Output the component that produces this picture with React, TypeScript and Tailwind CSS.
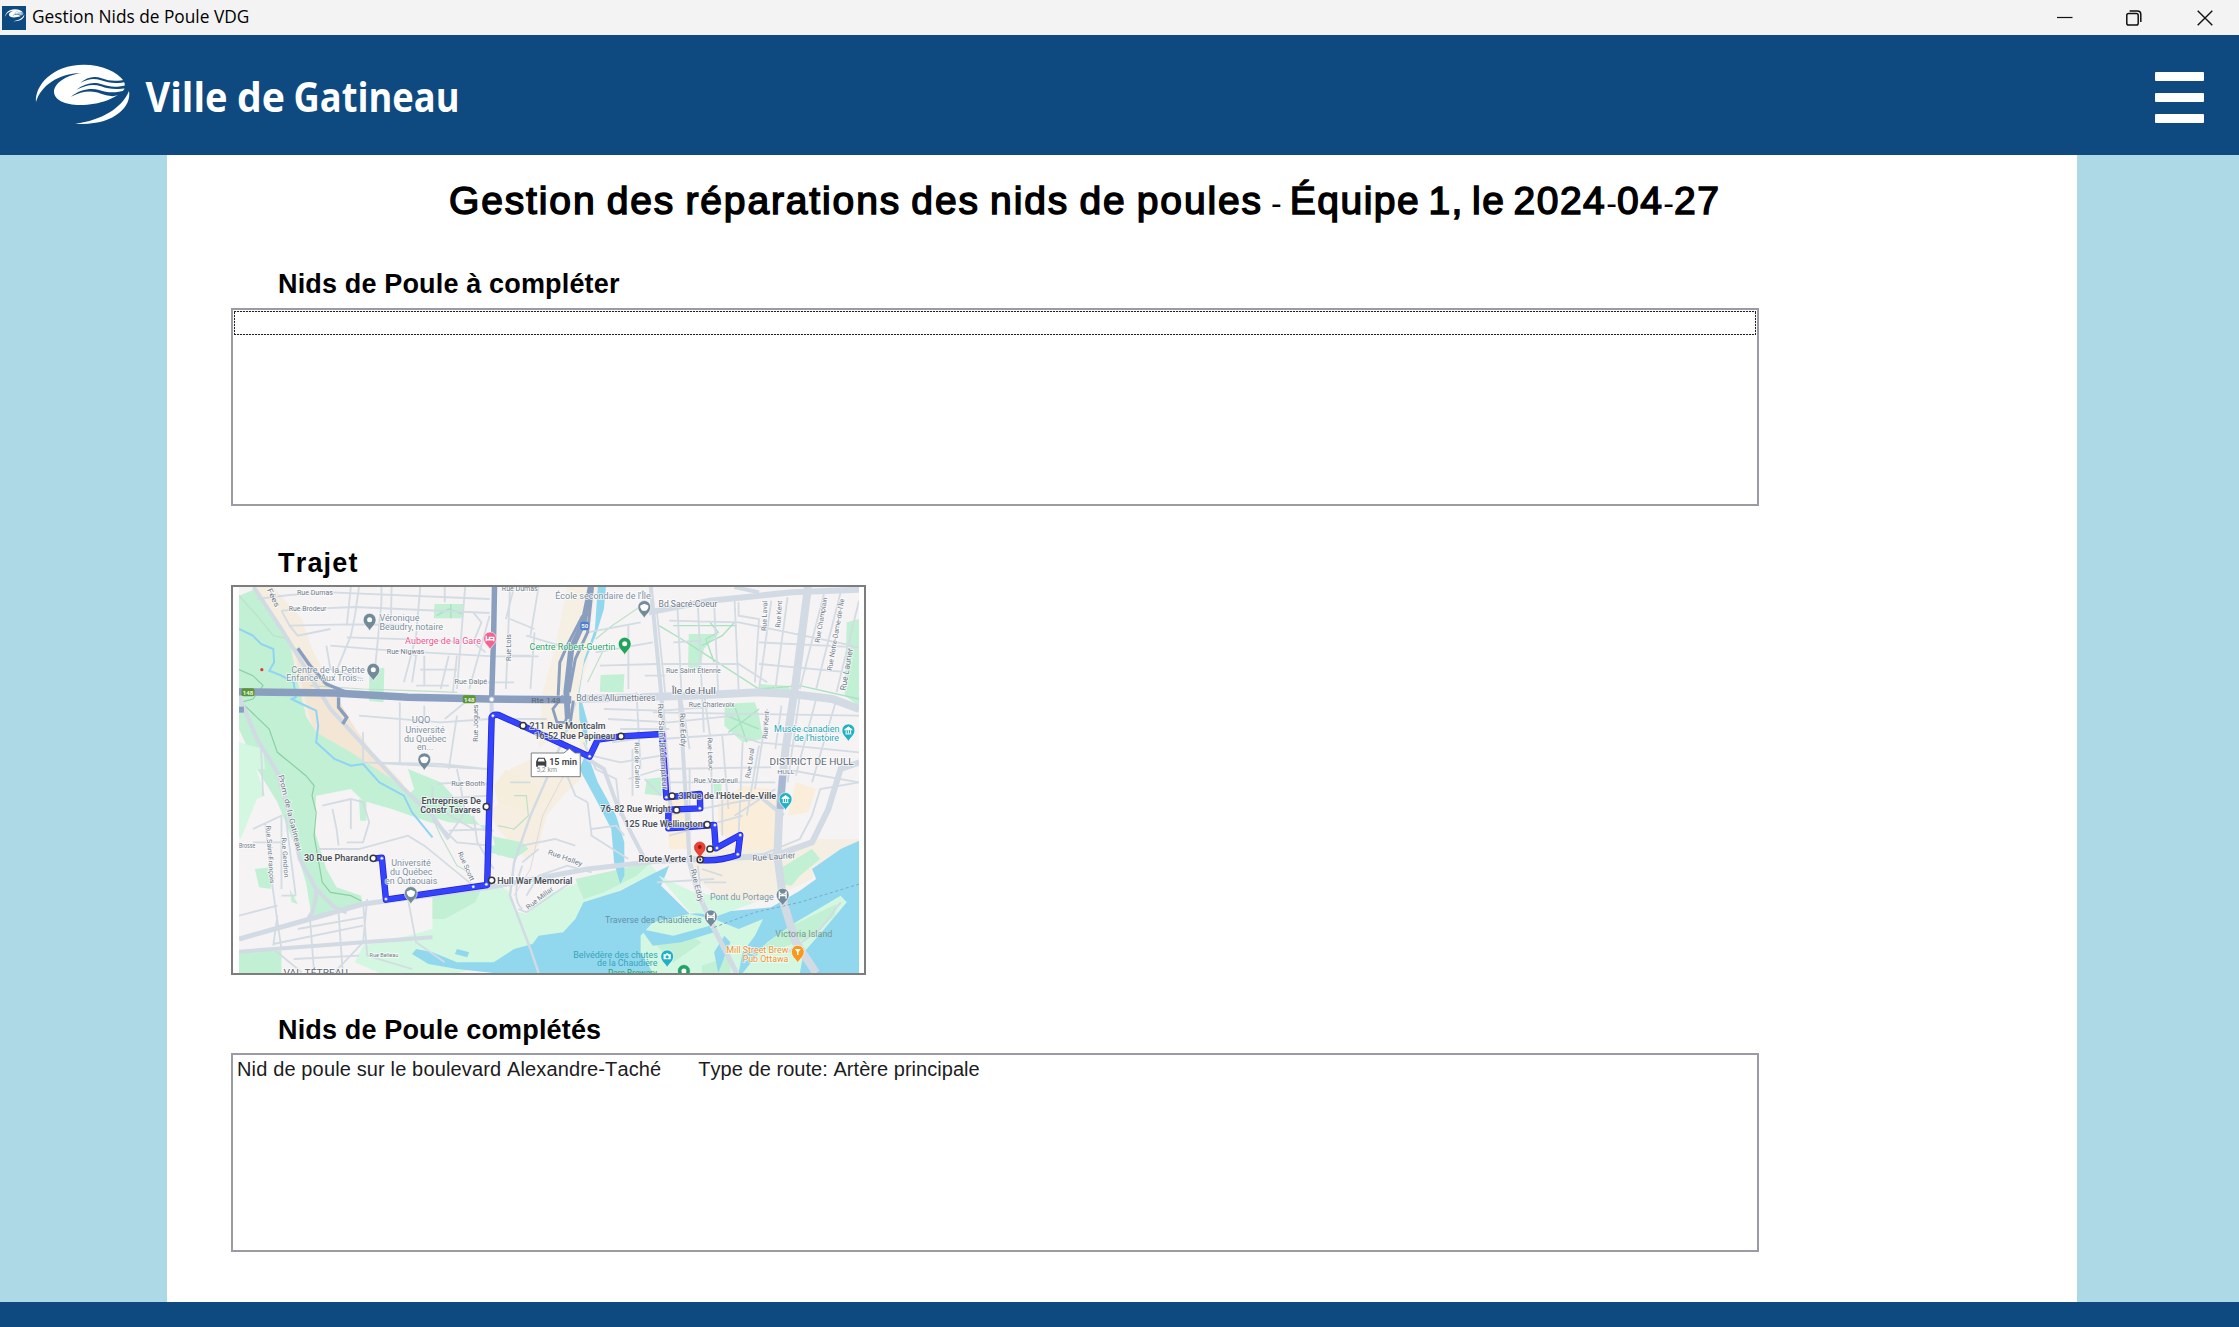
import React from "react";

const SANS = "font-['Liberation_Sans',Arial,sans-serif]";

function EyeMark() {
  return (
    <>
      <path
        fill="#fff"
        d="M33 141C29 92 82 29 176 29C232 29 276 50 296 77C301 86 300 98 297 104C276 128 226 150 164 150C121 150 87 134 87 110C87 86 122 61 168 54C98 56 48 92 33 141Z"
      />
      <path fill="#fff" d="M312 108C321 156 264 214 151 206C230 196 290 160 312 108Z" />
      <g fill="#0e4a80">
        <path d="M166 84C185 66 208 61 230 70C253 79 275 80 306 73L306 80C276 87 250 84 228 76C207 69 190 71 166 84Z" />
        <path d="M154 104C180 84 208 79 230 88C255 97 277 98 306 90L306 98C276 106 250 102 228 94C204 86 184 90 154 104Z" />
        <path d="M138 125C166 102 200 98 222 105C250 114 270 115 306 104L296 118L262 124C238 121 232 117 214 112C190 106 166 111 138 125Z" />
      </g>
    </>
  );
}

const INK = "#4b5058";
const kx = 1 / 2.45;
const ky = 1 / 3;
const px = (x: number) => (x - 26) * kx;
const py = (y: number) => (y - 14) * ky;

type LabelProps = {
  x: number;
  y: number;
  w: number;
  t: string;
  size?: number;
  color?: string;
  bold?: boolean;
  halo?: boolean;
  rot?: number;
};

/* w is in map units for horizontal labels and in screen pixels for rotated ones */
function Label({ x, y, w, t, size = 8.6, color = "#6f7a88", bold, halo = true, rot }: LabelProps) {
  const X = px(x);
  const Y = py(y);
  return (
    <text
      x={X}
      y={Y}
      fontSize={size}
      fill={color}
      fontWeight={bold ? 600 : 400}
      textLength={rot === undefined ? w * kx : w}
      lengthAdjust="spacingAndGlyphs"
      stroke={halo ? "#ffffff" : "none"}
      strokeWidth={halo ? 1.6 : 0}
      strokeOpacity={0.75}
      paintOrder="stroke"
      transform={rot === undefined ? undefined : `rotate(${rot} ${X} ${Y})`}
    >
      {t}
    </text>
  );
}

function Pin({ x, y, color, inner = "dot" }: { x: number; y: number; color: string; inner?: string }) {
  return (
    <g transform={`translate(${px(x)} ${py(y)})`}>
      <path
        d="M0 9.5C-1.2 5.5-6.4 3.6-6.4-2A6.4 6.4 0 0 1 6.4-2C6.4 3.6 1.2 5.5 0 9.5Z"
        fill={color}
        stroke="#fff"
        strokeWidth="0.6"
      />
      {inner === "dot" && <circle cy="-2" r="2.5" fill="#fff" />}
      {inner === "cap" && <path d="M-4-3.5L0-5.2L4-3.5V-1.5L2.6 1.2Q0 2.6-2.6 1.2L-4-1.5Z" fill="#fff" />}
      {inner === "bed" && <path d="M-3.8-4.6V1M-3.8-.6H3.8M3.8 1V-3H-.4V-.8M-2.2-2.4h.6" stroke="#fff" strokeWidth="1.3" fill="none" />}
      {inner === "bridge" && <path d="M-3.4-5.5V2M3.4-5.5V2M-3.4-1H3.4M-3.4-4Q0-.5 3.4-4" stroke="#fff" strokeWidth="1.3" fill="none" />}
      {inner === "museum" && <path d="M-3.8-2.6L0-5.4L3.8-2.6ZM-3 1.6H3M-2.2-2V1M0-2V1M2.2-2V1" stroke="#fff" strokeWidth="1" fill="#fff" />}
      {inner === "camera" && <path d="M-3.6-4H-1.4L-.7-5H.7L1.4-4H3.6V1H-3.6ZM0-3A1.6 1.6 0 1 0 .01-3Z" fill="#fff" fillRule="evenodd" />}
      {inner === "cup" && <path d="M-3-4.6H3L.7-1.6V1.4H-.7V-1.6Z" fill="#fff" />}
    </g>
  );
}

const minorRoads = [
  "M70 50L150 38L250 30L640 50M130 85L230 78L310 74L640 92M150 130L290 126L440 128M290 165L470 172L560 178M250 190L400 205L650 222L760 222",
  "M320 14L310 100L300 160L260 280M300 14L290 130M375 14V60L360 250L350 300M400 14L398 120M470 14L460 160L430 300M530 14V60M580 14L560 320M640 100L590 320M600 90L620 120L600 180L630 210",
  "M130 85L150 130L170 160L250 140M240 190L250 260L330 290M440 210L460 220L450 300M480 220V310M540 220L520 320M560 220L550 330M470 262H560M460 310H540M690 14L680 320M750 150L740 320M690 110L750 140M690 220H740M600 300H700",
  "M320 400L520 420L640 410M330 450V540L640 560M420 360V540M480 420V370M560 400L540 560M330 540L520 545L630 560M530 410L600 340M510 605L560 600L640 605M500 610V650L640 640M560 560L570 620L580 690L540 760",
  "M730 160L840 200M690 410H780M700 14L680 110M760 14L740 160M900 210L1040 180M880 150L1010 120M910 250L1050 245M980 130V320M1020 280L1070 280M1000 330L1010 560M1040 390L1545 400",
  "M1050 90L1070 330M1100 70L1110 330M1150 60L1165 450M1190 60L1200 330M1240 50L1250 320M1080 115L1250 120M1090 180L1160 175M1060 245L1250 245L1320 300M1250 60V100L1300 110L1290 300M1330 55L1300 320M1370 45L1340 320M1250 120L1530 190M1300 180L1545 195M1460 30L1400 320M1500 30L1440 320M1545 55L1490 330M1300 245L1520 270",
  "M920 380L1060 385L1230 370M930 410L1080 420L1240 400M960 440H1080M1060 470L1240 455L1300 480L1545 510M1110 350L1130 500M1165 330L1180 460L1190 800M1210 460L1225 680M1060 560L1330 555M1070 600L1340 600M980 590L1060 560M1260 480L1250 760M1300 490L1270 700M1320 380L1290 620M1355 370L1340 500M1400 340L1370 600M1440 350L1390 580M1490 350L1430 600M1340 440L1500 450M1360 560L1545 600",
  "M870 480L900 560L950 590L960 700M890 520L960 540L1060 520M800 560L830 580L850 640L880 660M890 740L950 730L970 760M880 660L890 760L980 830M940 480L1060 460M990 500V640M1020 590L1060 640M1090 640L1240 650M1070 700L1330 640M1080 760L1260 700M1130 560V850M1210 640V760M1150 850L1160 960M1050 900L1190 890",
  "M220 800H320L440 760L480 790L600 910M230 670L300 650L330 660L345 720L330 780H290M255 680L265 740L270 790M300 650V740M80 500L85 640M60 740L130 700V920M90 720L110 930L130 1100M130 940H165M60 780L130 780M140 700L165 940M26 1000L120 970M120 1000L110 1090M200 1010L210 1170M270 990L280 1170M330 960L340 1120L450 1160M170 1040L330 1005M110 1085L330 1030M110 1100L180 1170M160 1130L320 1120M340 950L330 1080L260 1170",
  "M720 790L800 770L850 790M730 940L760 880L830 850L890 870M710 980L730 990L840 900M720 850Q690 950 720 980M720 840L760 800M640 740L540 745M530 690L600 740L650 745M640 790L560 780L500 710M600 700L610 780L650 860M690 600H740",
  "M440 950L460 1080L530 1140M1160 860L1210 880M1165 900H1220M1280 830L1400 770L1430 700L1450 620L1545 600M1240 700L1340 620M1270 830L1350 800M1370 1110L1450 1040L1500 960",
];

const poiGreen = "#1fa463";
const grey = "#738a98";

function TrajetMap() {
  const n = { vectorEffect: "non-scaling-stroke" as const };
  return (
    <svg width="620" height="386" viewBox="0 0 620 386" className="block font-[Roboto,'Noto_Sans',sans-serif]">
      <g transform="scale(0.408163 0.333333) translate(-26 -14)" fill="none">
        <rect x="26" y="14" width="1520" height="1158" fill="#f5f3f4" />
        {/* sand */}
        <path fill="#f4ede0" d="M60 14H110L180 110L205 200L260 330L330 480L420 590L480 690L420 640L300 520L210 440L160 330L150 190Z" />
        <path fill="#f3e6d4" d="M160 190L190 220L265 340L300 420L400 590L320 550L260 500L210 450L190 360Z" />
        <path fill="#f5f0e3" d="M830 14H905L890 100L880 240L860 330L880 480L870 560L860 470L800 450L760 500L770 330L800 200Z" />
        <path fill="#f5eee1" d="M690 560L760 520L870 580L820 640L780 700L760 790L730 830L660 740L640 690L680 640Z" />
        <path fill="#f6eedc" d="M790 640L740 690L660 660L650 610L680 560Z" />
        <path fill="#faeeda" d="M1070 650L1130 640V800H1080ZM1200 660L1260 610L1330 620L1360 700L1350 800L1240 800L1200 740ZM1390 600L1440 620L1420 690L1370 700Z" />
        <path fill="#f5efe3" d="M1130 800H1340L1450 770L1545 770V800L1440 850L1430 890L1380 920L1290 960H1210L1180 920L1130 880Z" />
        <path fill="#f4ece1" d="M1390 1172L1440 1090L1500 1010L1546 990V1172Z" />
        {/* parks */}
        <path fill="#c1f0d4" d="M26 40L62 22L90 70L130 130L150 180L170 300L190 400L215 450L300 510L400 590L450 650L520 730L470 710L400 680L330 655L300 620L215 640L210 740L240 860L265 915L325 940L330 965L260 980L205 1010L190 900L160 780L120 660L70 560L26 440Z" />
        <path fill="#d3f7e1" d="M26 480L60 530L90 640L70 650L30 770L26 760ZM26 480L85 500L90 560L50 560Z" />
        <path fill="#c1f0d4" d="M330 620L440 640L455 620L440 560L520 600L640 760L720 780L730 800L660 820L640 730L540 720L440 680Z" />
        <path fill="#c1f0d4" d="M320 650L338 655V715H323Z" />
        <path fill="#c1f0d4" d="M505 65H575L573 108H503ZM345 262L382 256L380 360L345 356ZM65 860L105 855V920L75 915ZM912 278L970 276L968 330L910 328ZM1128 155L1200 155L1180 180L1165 200L1155 260L1126 258ZM1216 365L1290 360L1300 400L1310 470L1260 480L1215 430ZM1300 305L1370 310L1380 325L1300 322ZM1515 120L1546 110V370L1510 340ZM1025 590L1060 585L1062 640L1020 635ZM1188 605H1208V635H1190ZM150 920L170 965L155 960Z" />
        <path fill="#c1f0d4" d="M26 1105H130V1172H26Z" />
        <path fill="#d3f7e1" d="M330 1090L440 1060L500 1040L500 940L610 910L720 880L800 930L860 900L1030 840L1050 870L930 940L850 1010L820 1050L750 1110L640 1150L560 1172H370L310 1140Z" />
        <path fill="#f5f3f4" d="M650 900L720 850L760 800L850 790L860 860L780 940L730 995L700 985L690 930Z" />
        <path fill="#c1f0d4" d="M500 945L625 905L605 960L530 1010H500ZM850 890L1035 840L1000 880L920 930L870 950ZM640 790L720 780L735 800L700 830L640 810Z" />
        {/* water */}
        <path
          fill="#91d8ef"
          d="M1546 775L1500 800L1430 860L1440 890L1400 925L1330 975L1240 985L1130 994L1060 910L1080 850L1030 880L960 925L870 960L850 1010L820 1050L760 1060L745 1085L700 1100L650 1140L560 1140L500 1110L460 1100L450 1115L490 1145L560 1160L650 1172H1546Z"
        />
        <path fill="#91d8ef" d="M905 14H925L920 80L900 160L870 250L860 330L880 420L878 510L905 600L950 700L970 780V880L960 905L945 840L938 740L900 650L860 560L880 500L860 410L858 330L872 230L898 140Z" />
        <path fill="#91d8ef" d="M560 1100L590 1110L585 1125L555 1115Z" />
        {/* islands */}
        <path fill="#d3f7e1" d="M1010 1060L1040 1020L1130 995L1190 1010L1250 1040L1310 1010L1290 1060L1260 1110L1250 1172H1040L1010 1110Z" />
        <path fill="#d3f7e1" d="M1260 1172L1320 1080L1390 1020L1500 940L1515 960L1460 1040L1410 1110L1400 1172Z" />
        <path fill="#c1f0d4" d="M1310 1090L1380 1030L1490 965L1485 1000L1430 1060L1330 1110Z" />
        <path fill="#c1f0d4" d="M1050 1090L1130 1060L1160 1080L1090 1140ZM1160 1150L1230 1120V1172H1160ZM1350 860L1430 800L1450 830L1400 880L1380 910L1350 905Z" />
        <path fill="#d3f7e1" d="M1054 880L1140 930L1290 960L1200 1000L1130 990Z" />
        <path fill="#91d8ef" d="M1010 1040L1090 1060L1180 1030L1190 1050L1110 1080L1040 1090ZM1200 1172L1230 1080L1215 1060L1190 1110ZM1410 1150L1500 1030L1546 1000V1010L1440 1120Z" />
        {/* creeks and paths */}
        <path {...n} stroke="#8fd3f5" strokeWidth="2" d="M26 140L60 160L80 185L110 200L112 240L100 265L130 280L160 300L165 345L155 350L180 365L215 385L220 430L215 480L260 530L300 550L330 545L370 600L430 640L450 690L500 765" />
        <path {...n} stroke="#8ccfa2" strokeWidth="1.2" d="M26 262L60 280L85 310L60 350L30 360M40 370L100 440L120 510L190 580L210 610L205 640L215 690L210 760L230 900L250 930L300 940L325 955" />
        <path {...n} stroke="#bfe0c8" strokeWidth="1.2" d="M26 40L70 100L110 160L150 170M200 310L330 320L450 325L560 330M480 650L520 760L560 850L590 870M900 170L940 130L1000 80L1030 60M880 300L920 200M700 640L730 640L735 700L700 740L660 730" />
        <path {...n} stroke="#a9e2c0" strokeWidth="1.4" d="M1055 130L1110 170L1180 225L1300 320L1400 310L1546 350M1090 130H1245M1160 190L1210 160L1240 120M1180 120L1200 150L1170 170L1190 240M1220 400L1300 440M1240 370L1270 480M1225 450L1300 380M510 100L540 80L575 95M545 65V108" />
        {/* minor streets */}
        <g stroke="#d3dbe3">
          {minorRoads.map((d) => (
            <path key={d} {...n} strokeWidth="1.8" d={d} />
          ))}
        </g>
        {/* arterial streets */}
        <g stroke="#d2dae4">
          <path {...n} strokeWidth="4" d="M62 14L130 140L190 260L250 380L370 540L430 620L500 700L540 770" />
          <path {...n} strokeWidth="4" d="M26 340L70 470L120 570L150 700L175 830L215 920L260 975L290 990M215 920Q215 980 195 1010" />
          <path {...n} strokeWidth="5" d="M26 1070L200 1010L330 965L640 915L880 860L1060 835" />
          <path {...n} strokeWidth="4" d="M26 1108L330 1080L500 1065" />
          <path {...n} strokeWidth="8" d="M860 350L1130 340L1300 330L1380 335L1480 350L1546 380" />
          <path {...n} strokeWidth="4" d="M1035 14L1060 330L1085 700M1105 330L1130 840" />
          <path {...n} strokeWidth="6" d="M1030 90L1180 55L1380 30L1546 22" />
          <path {...n} strokeWidth="8" d="M1420 14L1390 300L1365 500L1350 680L1345 820L1360 960L1390 1080L1440 1172" />
          <path {...n} strokeWidth="6" d="M1060 835L1340 820L1430 780L1470 680L1500 560L1546 540" />
          <path {...n} strokeWidth="5" d="M1130 840L1150 930L1190 1040L1245 1172" />
          <path {...n} strokeWidth="4" d="M880 530L920 560L950 660L990 760L1020 830" />
          <path {...n} strokeWidth="4" d="M645 350V410M1240 14L1300 30M1360 700L1300 640" />
          <path {...n} strokeWidth="2.4" d="M850 360L830 440L790 560L740 700L700 840L690 940L740 1100L760 1172" />
          <path {...n} stroke="#e0d9da" strokeWidth="1" d="M700 940L740 860L770 700L830 560" />
        </g>
        <path {...n} stroke="#a9b8d2" strokeWidth="7" d="M1358 580L1352 680" />
        {/* highways */}
        <g stroke="#8a9fc0">
          <path {...n} strokeWidth="7.5" d="M26 328L260 332L440 345L640 350L840 352" />
          <path {...n} strokeWidth="5.5" d="M652 14L650 150L645 350" />
          <path {...n} strokeWidth="3.4" d="M170 198L200 250L240 305L300 335M270 345V375L290 405L280 425" />
          <path {...n} strokeWidth="6" d="M888 14L870 120L840 200L828 330L832 410" />
          <path {...n} strokeWidth="3" d="M868 100L830 190L812 240L808 340M892 14L880 150L850 230L835 330" />
          <path {...n} strokeWidth="2.8" d="M820 340L795 380L805 420L825 420L835 380M845 355L838 420" />
          <path {...n} strokeWidth="6" d="M26 382H38" />
        </g>
        <path {...n} stroke="#7ea7c4" strokeWidth="1" strokeDasharray="3 2.5" d="M1190 1035L1290 990L1400 960L1546 905" />
        {/* itinerary */}
        {[
          { c: "#2325c9", w: 6.4 },
          { c: "#3443ff", w: 5 },
        ].map((s) => (
          <g key={s.c} stroke={s.c} strokeLinejoin="round" strokeLinecap="round">
            <path {...n} strokeWidth={s.w} d="M360 828L376 826L386 952L634 908L645 405Q648 395 662 398L720 430L885 523L905 472L962 462L1062 455L1073 645L1155 635L1156 678L1078 682L1078 738L1190 728L1194 798L1254 758L1248 818Q1200 838 1158 833" />
          </g>
        ))}
      </g>
      {/* waypoints */}
      {[[376, 828], [386, 950], [600, 913], [632, 906], [648, 400], [885, 522], [1073, 645], [1155, 678], [1078, 738], [1192, 728], [1197, 797], [1254, 758], [1248, 816]].map(([x, y]) => (
        <circle key={`${x}-${y}`} cx={px(x)} cy={py(y)} r="1.5" fill="#fff" stroke="#5d68f5" strokeWidth="0.5" />
      ))}
      <circle cx={px(645)} cy={py(351)} r="2.3" fill="#fff" stroke="#b9c5d8" />
      <circle cx={px(82)} cy={py(262)} r="1.6" fill="#dd3b2e" />
      {/* road shields */}
      <g fontWeight="700" fontSize="6" fill="#f3f7e4" textAnchor="middle">
        <rect x={px(32)} y={py(318)} width="13" height="8" rx="2" fill="#5b9634" />
        <text x={px(48)} y={py(337)}>148</text>
        <rect x={px(574)} y={py(339)} width="13" height="8" rx="2" fill="#5b9634" />
        <text x={px(590)} y={py(358)}>148</text>
        <rect x={px(862)} y={py(118)} width="9" height="8.5" rx="2.5" fill="#4c7fd0" />
        <text x={px(873)} y={py(138)}>50</text>
      </g>

      <Label x={168} y={38} w={88} t="Rue Dumas" size={7.2} />
      <Label x={148} y={86} w={92} t="Rue Brodeur" size={7.2} />
      <Label x={670} y={26} w={88} t="Rue Dumas" size={7.2} />
      <Label x={388} y={214} w={92} t="Rue Nigwas" size={7.2} />
      <Label x={554} y={306} w={80} t="Rue Dalpé" size={7.2} />
      <Label x={742} y={362} w={72} t="Rte 148" size={7.8} color="#5d6672" halo={false} />
      <Label x={852} y={357} w={194} t="Bd des Allumettières" size={8.2} />
      <Label x={1054} y={74} w={144} t="Bd Sacré-Coeur" size={8.2} />
      <Label x={1072} y={272} w={134} t="Rue Saint Étienne" size={7} />
      <Label x={1128} y={374} w={112} t="Rue Charlevoix" size={7} />
      <Label x={1140} y={602} w={108} t="Rue Vaudreuil" size={7} />
      <Label x={546} y={612} w={82} t="Rue Booth" size={7} />
      <Label x={346} y={1124} w={70} t="Rue Belleau" size={6} />
      <Label x={26} y={796} w={40} t="Brosse" size={7} />
      <Label x={1284} y={836} w={43} t="Rue Laurier" size={8.4} rot={-4} />
      <Label x={135} y={1182} w={158} t="VAL-TÉTREAU" size={9} color="#606873" />
      <Label x={1326} y={548} w={206} t="DISTRICT DE HULL" size={8.4} color="#606873" />
      <Label x={1345} y={576} w={42} t="HULL" size={5.6} />
      <Label x={1086} y={336} w={108} t="Île de Hull" size={9.6} color="#5d6672" />
      <Label x={94} y={22} w={20} t="Fées" size={7.6} rot={65} />
      <Label x={122} y={580} w={78} t="Prom. de la Gatineau" size={7.6} rot={76} />
      <Label x={92} y={730} w={58} t="Rue Saint-François" size={6.8} rot={86} />
      <Label x={130} y={766} w={40} t="Rue Gendron" size={6.8} rot={86} />
      <Label x={562} y={812} w={31} t="Rue Scott" size={6.8} rot={66} />
      <Label x={612} y={478} w={37} t="Rue Jogues" size={6.8} rot={-90} />
      <Label x={693} y={236} w={27} t="Rue Lois" size={6.8} rot={-90} />
      <Label x={782} y={815} w={36} t="Rue Halley" size={7} rot={20} />
      <Label x={735} y={982} w={32} t="Rue Millar" size={7} rot={-38} />
      <Label x={1052} y={364} w={86} t="Rue Saint-Rédempteur" size={7.6} rot={87} />
      <Label x={1106} y={392} w={34} t="Rue Eddy" size={7.6} rot={88} />
      <Label x={1132} y={862} w={34} t="Rue Eddy" size={7.6} rot={76} />
      <Label x={995} y={480} w={46} t="Rue de Carillon" size={6.8} rot={89} />
      <Label x={1174} y={466} w={33} t="Rue Leduc" size={6.8} rot={88} />
      <Label x={1278} y={588} w={30} t="Rue Laval" size={7} rot={-82} />
      <Label x={1320} y={470} w={28} t="Rue Kent" size={7} rot={-86} />
      <Label x={1318} y={146} w={30} t="Rue Laval" size={7} rot={-88} />
      <Label x={1352} y={136} w={27} t="Rue Kent" size={7} rot={-86} />
      <Label x={1448} y={182} w={46} t="Rue Champlain" size={7} rot={-80} />
      <Label x={1478} y={266} w={73} t="Rue Notre-Dame-de-l'Île" size={7} rot={-80} />
      <Label x={1512} y={326} w={43} t="Rue Laurier" size={8.2} rot={-80} />

      <Label x={370} y={117} w={98} t="Véronique" color="#7c909c" />
      <Label x={370} y={143} w={156} t="Beaudry, notaire" color="#7c909c" />
      <Label x={154} y={271} w={180} t="Centre de la Petite" color="#7c909c" />
      <Label x={142} y={296} w={190} t="Enfance Aux Trois..." color="#7c909c" />
      <Label x={449} y={423} w={46} t="UQO" color="#7c909c" />
      <Label x={434} y={452} w={96} t="Université" color="#7c909c" />
      <Label x={430} y={478} w={104} t="du Québec" color="#7c909c" />
      <Label x={462} y={504} w={40} t="en..." color="#7c909c" />
      <Label x={399} y={852} w={97} t="Université" color="#7c909c" />
      <Label x={396} y={878} w={104} t="du Québec" color="#7c909c" />
      <Label x={384} y={904} w={128} t="en Outaouais" color="#7c909c" />
      <Label x={801} y={50} w={234} t="École secondaire de l'Île" color="#7c909c" />
      <Label x={433} y={184} w={186} t="Auberge de la Gare" color="#f0528c" />
      <Label x={738} y={203} w={210} t="Centre Robert-Guertin" color="#2aa565" />
      <Label x={1337} y={450} w={160} t="Musée canadien" color="#2aa6b5" />
      <Label x={1386} y={476} w={110} t="de l'histoire" color="#2aa6b5" />
      <Label x={1180} y={953} w={156} t="Pont du Portage" color="#7d98aa" halo={false} />
      <Label x={923} y={1022} w={236} t="Traverse des Chaudières" color="#668fa8" halo={false} />
      <Label x={1340} y={1065} w={140} t="Victoria Island" color="#759b89" halo={false} />
      <Label x={1220} y={1112} w={152} t="Mill Street Brew" color="#f2932b" />
      <Label x={1260} y={1138} w={112} t="Pub Ottawa" color="#f2932b" />
      <Label x={845} y={1126} w={207} t="Belvédère des chutes" color="#35a5b8" halo={false} />
      <Label x={903} y={1151} w={148} t="de la Chaudière" color="#35a5b8" halo={false} />
      <Label x={930} y={1182} w={120} t="Parc Brewery" color="#2aa565" halo={false} />

      <Pin x={346} y={118} color={grey} />
      <Pin x={355} y={268} color={grey} />
      <Pin x={480} y={537} color={grey} inner="cap" />
      <Pin x={447} y={938} color={grey} inner="cap" />
      <Pin x={1019} y={80} color={grey} inner="cap" />
      <Pin x={641} y={174} color="#f4628f" inner="bed" />
      <Pin x={971} y={190} color="#22a35a" />
      <Pin x={1519} y={450} color="#21b1c4" inner="museum" />
      <Pin x={1365} y={656} color="#21b1c4" inner="museum" />
      <Pin x={1358} y={943} color={grey} inner="bridge" />
      <Pin x={1182} y={1008} color={grey} inner="bridge" />
      <Pin x={1395} y={1114} color="#f8991d" inner="cup" />
      <Pin x={1075} y={1128} color="#21b1c4" inner="camera" />
      <Pin x={1116} y={1172} color={poiGreen} />

      {/* duration card */}
      <g>
        <path d={`M${px(742)} ${py(512)}H${px(822)}l5.5 -4.5l5.5 4.5H${px(862)}V${py(583)}H${px(742)}Z`} fill="#fff" stroke="#70757a" strokeWidth="0.9" />
        <g transform={`translate(${px(753)} ${py(526)})`} fill="#3c4043">
          <path d="M2.2 0H8.8L10.6 3.8V9H8.8V7.8H2.2V9H.4V3.8ZM3 1.2L2 3.8H9L8 1.2Z" fillRule="evenodd" />
        </g>
        <Label x={786} y={549} w={68} t="15 min" size={9} color="#3c4043" bold halo={false} />
        <Label x={755} y={570} w={50} t="5,2 km" size={6.6} color="#8b8f94" halo={false} />
      </g>

      {/* stops */}
      <Label x={738} y={441} w={186} t="211 Rue Montcalm" color={INK} bold />
      <Label x={750} y={469} w={198} t="16-52 Rue Papineau" color={INK} bold />
      <Label x={473} y={665} w={146} t="Entreprises De" color={INK} bold />
      <Label x={470} y={693} w={148} t="Constr Tavares" color={INK} bold />
      <Label x={185} y={836} w={158} t="30 Rue Pharand" color={INK} bold />
      <Label x={659} y={905} w={184} t="Hull War Memorial" color={INK} bold />
      <Label x={1103} y={650} w={239} t="3 Rue de l'Hôtel-de-Ville" color={INK} bold />
      <Label x={912} y={689} w={172} t="76-82 Rue Wright" color={INK} bold />
      <Label x={970} y={735} w={192} t="125 Rue Wellington" color={INK} bold />
      <Label x={1005} y={840} w={134} t="Route Verte 1" color={INK} bold />
      {[[355, 828], [645, 894], [632, 673], [722, 430], [962, 462], [1087, 641], [1098, 683], [1173, 727], [1180, 800], [1156, 832]].map(([x, y]) => (
        <circle key={`${x}-${y}`} cx={px(x)} cy={py(y)} r="3.1" fill="#fff" stroke="#33363a" strokeWidth="1.5" />
      ))}
      <circle cx={px(1156)} cy={py(832)} r="1.1" fill="#33363a" />
      <path transform={`translate(${px(1155)} ${py(798)})`} d="M0 10C-.7 5-5.4 3.8-5.4-1A5.4 5.4 0 0 1 5.4-1C5.4 3.8 .7 5 0 10Z" fill="#ea4335" stroke="#c5221f" strokeWidth="0.6" />
      <circle cx={px(1155)} cy={py(794)} r="1.9" fill="#9c1510" />
    </svg>
  );
}

function TitleBar() {
  return (
    <div className="flex h-[35px] items-center justify-between bg-[#f3f3f3]">
      <div className="flex items-center gap-[6px] pl-[2px]">
        <svg width="24" height="24" viewBox="0 0 24 24">
          <rect width="24" height="24" fill="#0e4a80" />
          <g transform="translate(1 1.2) scale(0.068)">
            <EyeMark />
          </g>
        </svg>
        <span className="-mt-px font-['Open_Sans','Noto_Sans',sans-serif] text-[17.3px] leading-[24px] text-black">
          Gestion Nids de Poule VDG
        </span>
      </div>
      <div className="flex items-center pr-[26px]">
        <svg width="16" height="16" viewBox="0 0 16 16" className="mr-[53px]">
          <path d="M0 7.5H15.5" stroke="#111" strokeWidth="1.2" />
        </svg>
        <svg width="16" height="16" viewBox="0 0 16 16" fill="none" stroke="#111" strokeWidth="1.5" className="mr-[55px]">
          <rect x="0.8" y="3.6" width="11.4" height="11.4" rx="1.8" />
          <path d="M3.6.9H11.4Q14.8.9 14.8 4.3V12" />
        </svg>
        <svg width="16" height="16" viewBox="0 0 16 16" stroke="#111" strokeWidth="1.4">
          <path d="M.7.7L15.3 15.3M15.3.7L.7 15.3" />
        </svg>
      </div>
    </div>
  );
}

function Heading({ children, wide }: { children: React.ReactNode; wide?: boolean }) {
  return (
    <h2
      className={`ml-[47px] whitespace-nowrap text-[27px] font-bold leading-[30px] text-black [font-kerning:none] ${
        wide ? "tracking-[1.2px]" : "tracking-[0.16px]"
      }`}
    >
      {children}
    </h2>
  );
}

function FocusRow() {
  return (
    <div className="flex h-[24px] flex-col">
      <div className="h-px bg-[repeating-linear-gradient(90deg,#222_0px,#222_2px,#e8e8e8_2px,#e8e8e8_3px)]" />
      <div className="flex flex-1 justify-between">
        <div className="w-px bg-[repeating-linear-gradient(180deg,#222_0px,#222_2px,#e8e8e8_2px,#e8e8e8_3px)]" />
        <div className="w-px bg-[repeating-linear-gradient(180deg,#222_0px,#222_2px,#e8e8e8_2px,#e8e8e8_3px)]" />
      </div>
      <div className="h-px bg-[repeating-linear-gradient(90deg,#222_0px,#222_2px,#e8e8e8_2px,#e8e8e8_3px)]" />
    </div>
  );
}

/* hyphens of the page title are drawn thinner and shorter than its letters */
function ThinHyphen() {
  return <span className="text-[32px] tracking-[0px] [-webkit-text-stroke:0px]">-</span>;
}

export default function App() {
  return (
    <div className={`flex h-[1327px] w-[2239px] flex-col overflow-hidden bg-[#add8e6] ${SANS}`}>
      <TitleBar />
      <header className="flex h-[120px] shrink-0 items-center justify-between bg-[#0e4a80] pr-[35px] pl-[25px]">
        <svg width="440" height="80" viewBox="0 0 440 80" className="overflow-visible">
          <g transform="scale(0.33333)">
            <EyeMark />
          </g>
          <g fontSize="42" fontWeight="700" fill="#fff" className="font-['Open_Sans','Noto_Sans',sans-serif]">
            <text x="120.5" y="56.8" textLength="82" lengthAdjust="spacingAndGlyphs">Ville</text>
            <text x="212" y="56.8" textLength="48" lengthAdjust="spacingAndGlyphs">de</text>
            <text x="268.5" y="56.8" textLength="166" lengthAdjust="spacingAndGlyphs">Gatineau</text>
          </g>
        </svg>
        <div className="mt-[5px] flex w-[49px] flex-col gap-[12px]">
          <span className="h-[9px] rounded-[1px] bg-white" />
          <span className="h-[9px] rounded-[1px] bg-white" />
          <span className="h-[9px] rounded-[1px] bg-white" />
        </div>
      </header>
      <main className="mr-[162px] ml-[167px] flex h-[1147px] shrink-0 flex-col bg-white pl-[64px]">
        <h1 className="mt-[24px] ml-[218px] h-[44px] whitespace-nowrap text-[39px] font-normal leading-[44px] tracking-[1.5px] text-black [-webkit-text-stroke:1.5px_black] [word-spacing:-2.4px]">
          <span className="tracking-[1.86px]">Gestion des réparations des nids de poules</span>
          <span className="[word-spacing:-4.2px]"> <ThinHyphen /> Équipe 1, le 2024</span>
          <ThinHyphen />04<ThinHyphen />27
        </h1>
        <div className="mt-[46px]">
          <Heading>Nids de Poule à compléter</Heading>
        </div>
        <div className="mt-[9px] h-[198px] w-[1528px] border-2 border-[#9a9ba4] p-px">
          <FocusRow />
        </div>
        <div className="mt-[42px]">
          <Heading wide>Trajet</Heading>
        </div>
        <div className="mt-[7px] h-[390px] w-[635px] border-2 border-[#7d7d7d] pl-[6px]">
          <TrajetMap />
        </div>
        <div className="mt-[40px]">
          <Heading>Nids de Poule complétés</Heading>
        </div>
        <div className="mt-[8px] h-[199px] w-[1528px] border-2 border-[#9a9ba4] px-[4px]">
          <div className="flex gap-[37px] whitespace-nowrap text-[20px] leading-[29px] text-[#1c1c22] [font-kerning:none]">
            <span className="tracking-[0.14px]">Nid de poule sur le boulevard Alexandre-Taché</span>
            <span className="tracking-[0.04px]">Type de route: Artère principale</span>
          </div>
        </div>
      </main>
      <footer className="h-[25px] shrink-0 bg-[#0e4a80]" />
    </div>
  );
}
